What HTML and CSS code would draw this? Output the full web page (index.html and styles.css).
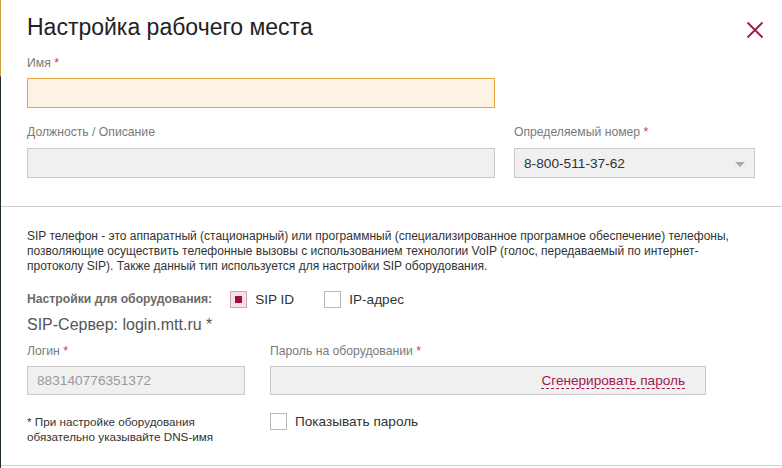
FILE: index.html
```html
<!DOCTYPE html>
<html lang="ru">
<head>
<meta charset="utf-8">
<title>Настройка рабочего места</title>
<link rel="stylesheet" href="styles.css">
</head>
<body>
<div class="page">
  <div class="backdrop-strip"></div>
  <div class="modal">
    <div class="top">
      <div class="header">
        <h1 class="title">Настройка рабочего места</h1>
        <button class="close" aria-label="Закрыть">
          <svg width="18" height="18" viewBox="0 0 18 18"><path d="M1.5 1.5 L16.5 16.5 M16.5 1.5 L1.5 16.5" stroke="#a3194b" stroke-width="1.8" fill="none"/></svg>
        </button>
      </div>
      <div class="field field-name">
        <div class="label">Имя <span class="req">*</span></div>
        <div class="input input-focus"></div>
      </div>
      <div class="row">
        <div class="field field-desc">
          <div class="label">Должность / Описание</div>
          <div class="input"></div>
        </div>
        <div class="field field-num">
          <div class="label">Определяемый номер <span class="req">*</span></div>
          <div class="input select"><span class="value">8-800-511-37-62</span><span class="arrow"></span></div>
        </div>
      </div>
    </div>
    <div class="bottom">
      <p class="desc">SIP телефон - это аппаратный (стационарный) или программный (специализированное програмное обеспечение) телефоны, позволяющие осуществить телефонные вызовы с использованием технологии VoIP (голос, передаваемый по интернет-протоколу SIP). Также данный тип используется для настройки SIP оборудования.</p>
      <div class="hw-row">
        <span class="hw-label">Настройки для оборудования:</span>
        <label class="check"><span class="box checked"><span class="dot"></span></span><span class="check-text">SIP ID</span></label>
        <label class="check"><span class="box"></span><span class="check-text">IP-адрес</span></label>
      </div>
      <div class="server">SIP-Сервер: login.mtt.ru *</div>
      <div class="row row-creds">
        <div class="col-login">
          <div class="field">
            <div class="label">Логин <span class="req">*</span></div>
            <div class="input small"><span class="muted">883140776351372</span></div>
          </div>
          <div class="note">* При настройке оборудования<br>обязательно указывайте DNS-имя</div>
        </div>
        <div class="col-pass">
          <div class="field">
            <div class="label">Пароль на оборудовании <span class="req">*</span></div>
            <div class="input small pass"><span class="gen">Сгенерировать пароль</span></div>
          </div>
          <label class="check show-pass"><span class="box"></span><span class="check-text">Показывать пароль</span></label>
        </div>
      </div>
    </div>
    <div class="footer"></div>
  </div>
</div>
</body>
</html>
```

FILE: styles.css
```css
* { box-sizing: border-box; }
html, body { margin: 0; padding: 0; }
body {
  font-family: "Liberation Sans", Arial, sans-serif;
  background: #ffffff;
  color: #333;
  width: 782px;
  height: 468px;
  overflow: hidden;
}
.page { display: flex; height: 468px; }
.backdrop-strip {
  width: 1px;
  flex: none;
  background: linear-gradient(to bottom, #c9a23a 0, #c9a23a 76px, #1f2c33 77px, #1f2c33 100%);
}
.modal { flex: 1; display: flex; flex-direction: column; background: #fff; }
.top { padding: 0 26px 28px 26px; border-bottom: 1px solid #cfcfcf; }
.header {
  display: flex;
  align-items: center;
  justify-content: space-between;
  height: 54px;
  margin-right: -8px;
}
.title {
  margin: 0;
  font-weight: normal;
  font-size: 23px;
  line-height: 28px;
  color: #222;
}
.close {
  border: 0;
  background: none;
  padding: 0;
  width: 18px;
  height: 18px;
  display: flex;
  cursor: pointer;
  margin-top: 5px;
}
.label {
  font-size: 12.2px;
  line-height: 16px;
  color: #7a7a7a;
  margin-bottom: 8px;
}
.field-name .label { margin-top: 1px; margin-bottom: 7px; }
.req { color: #c2406a; }
.input {
  height: 30px;
  border: 1px solid #c9c9c9;
  background: #f0f0f0;
  display: flex;
  align-items: center;
  padding: 0 9px;
  font-size: 13.7px;
  color: #333;
}
.input-focus { border-color: #e8a540; background: #fdf3e3; }
.field-name { width: 468px; }
.row { display: flex; }
.top .row { margin-top: 16px; gap: 19px; }
.field-desc { width: 468px; }
.field-num { width: 241px; }
.select { justify-content: space-between; }
.arrow {
  width: 0; height: 0;
  border-left: 5px solid transparent;
  border-right: 5px solid transparent;
  border-top: 5px solid #a9a9a9;
  margin-top: 2px;
}
.bottom { padding: 22px 26px 0 26px; flex: 1; }
.desc {
  margin: 0;
  font-size: 12px;
  line-height: 15px;
  color: #333;
  width: 722px;
}
.hw-row {
  display: flex;
  align-items: center;
  margin-top: 16px;
  height: 18px;
}
.hw-label {
  font-size: 12.2px;
  font-weight: bold;
  color: #6a6a6a;
  margin-right: 18px;
}
.check { display: flex; align-items: center; }
.hw-row .check { margin-right: 30px; }
.box {
  width: 17px;
  height: 17px;
  border: 1px solid #b9b9b9;
  background: #fff;
  display: flex;
  align-items: center;
  justify-content: center;
  margin-right: 8px;
}
.box.checked { background: #f7e1e8; border-color: #c9aab4; }
.dot { width: 7px; height: 7px; background: #a10c3f; }
.check-text { font-size: 13.6px; color: #333; }
.server {
  margin-top: 7px;
  font-size: 16px;
  line-height: 19px;
  color: #555;
}
.row-creds { margin-top: 9px; gap: 25px; }
.col-login { width: 218px; }
.col-pass { width: 436px; }
.field .label + .input.small { margin-top: -1px; }
.input.small { height: 29px; }
.muted { color: #9a9a9a; }
.pass { justify-content: flex-end; padding-right: 20px; }
.gen {
  color: #a3194b;
  font-size: 13.6px;
  line-height: 15px;
  border-bottom: 1px dashed #a3194b;
}
.note {
  margin-top: 19px;
  font-size: 11.7px;
  line-height: 15px;
  color: #333;
}
.show-pass { margin-top: 18px; }
.footer { height: 3px; border-top: 1px solid #cfcfcf; }
```
